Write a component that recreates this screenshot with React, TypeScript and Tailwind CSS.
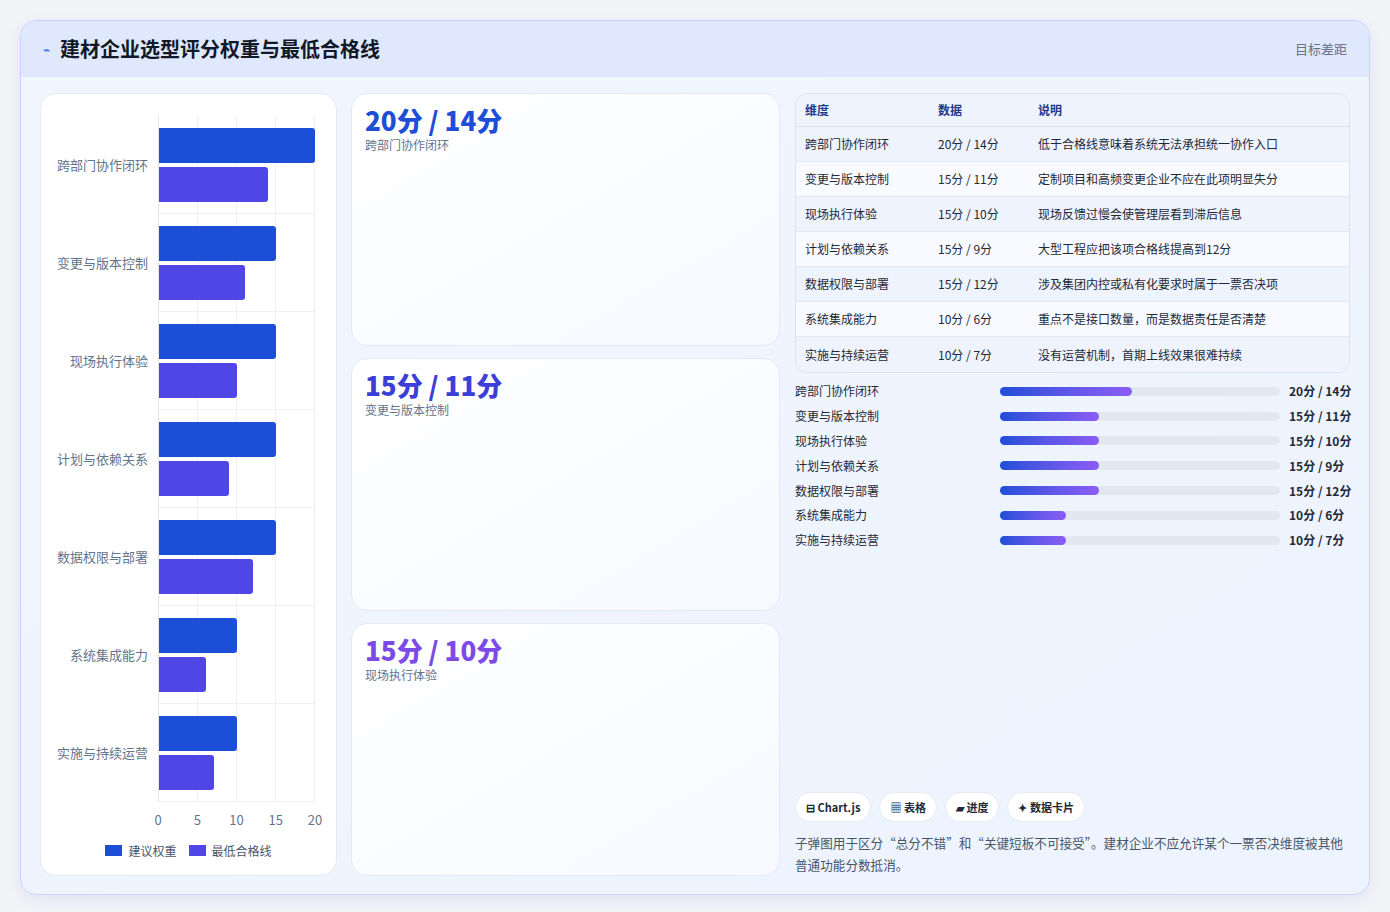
import React from "react";

const rows = [
  { name: "跨部门协作闭环", w: 20, m: 14, note: "低于合格线意味着系统无法承担统一协作入口" },
  { name: "变更与版本控制", w: 15, m: 11, note: "定制项目和高频变更企业不应在此项明显失分" },
  { name: "现场执行体验", w: 15, m: 10, note: "现场反馈过慢会使管理层看到滞后信息" },
  { name: "计划与依赖关系", w: 15, m: 9, note: "大型工程应把该项合格线提高到12分" },
  { name: "数据权限与部署", w: 15, m: 12, note: "涉及集团内控或私有化要求时属于一票否决项" },
  { name: "系统集成能力", w: 10, m: 6, note: "重点不是接口数量，而是数据责任是否清楚" },
  { name: "实施与持续运营", w: 10, m: 7, note: "没有运营机制，首期上线效果很难持续" },
];

const font = { fontFamily: '"Noto Sans CJK SC", "Noto Sans", sans-serif' };

const Chart = () => (
  <div className="flex h-full flex-col rounded-2xl border border-[#e3e9f5] bg-white px-3 pt-[22px] pb-3">
    <div className="flex">
      <div className="w-[105px] pr-[10px]">
        {rows.map((r) => (
          <div key={r.name} className="flex h-[98px] items-center justify-end text-[13px] text-[#64748b]">
            {r.name}
          </div>
        ))}
      </div>
      <div className="relative w-[157px] border-l border-[#e5e7eb]">
        <div className="absolute inset-0 grid grid-cols-4">
          {[0, 1, 2, 3].map((i) => (
            <div key={i} className="border-r border-[#eef0f4]" />
          ))}
        </div>
        {rows.map((r) => (
          <div key={r.name} className="relative flex h-[98px] flex-col justify-center gap-1 border-b border-[#eef0f4]">
            <div className="h-[35px] rounded-r-[3px] bg-[#1d4ed8]" style={{ width: `${(r.w / 20) * 156}px` }} />
            <div className="h-[35px] rounded-r-[3px] bg-[#4f46e5]" style={{ width: `${(r.m / 20) * 156}px` }} />
          </div>
        ))}
      </div>
    </div>
    <div className="ml-[105px] flex w-[157px] justify-between pt-2 text-[13px] text-[#64748b]">
      {["0", "5", "10", "15", "20"].map((t) => (
        <span key={t} className="flex w-0 justify-center whitespace-nowrap">{t}</span>
      ))}
    </div>
    <div className="mt-3 flex justify-center gap-3 text-[12px] text-[#475569]">
      <span className="flex items-center gap-[6px]"><span className="h-[11px] w-[17px] bg-[#1d4ed8]" />建议权重</span>
      <span className="flex items-center gap-[6px]"><span className="h-[11px] w-[17px] bg-[#4f46e5]" />最低合格线</span>
    </div>
  </div>
);

const cards = [
  { t: "20分 / 14分", s: "跨部门协作闭环", c: "text-[#1d4ed8]" },
  { t: "15分 / 11分", s: "变更与版本控制", c: "text-[#3b3fd8]" },
  { t: "15分 / 10分", s: "现场执行体验", c: "text-[#7c4ae6]" },
];

export default function App() {
  return (
    <div className="min-h-screen bg-[#f3f4f6] p-5" style={font}>
      <div className="overflow-hidden rounded-2xl border border-[#c7d2fe] bg-gradient-to-br from-[#f1f5fe] to-[#edf4ff] shadow-[0_4px_16px_rgba(99,102,241,0.12)]">
        <div className="flex h-[56px] items-center justify-between bg-[#dfe8fd] px-[22px]">
          <div className="flex items-center gap-[10px]">
            <span className="text-[12px] text-[#2563eb]">⌁</span>
            <h1 className="text-[20px] font-bold text-[#111827]">建材企业选型评分权重与最低合格线</h1>
          </div>
          <span className="text-[13px] text-[#64748b]">目标差距</span>
        </div>
        <div className="flex gap-[14px] px-[19px] pt-[16px] pb-[18px]">
          <div className="w-[297px] shrink-0">
            <Chart />
          </div>
          <div className="flex w-[429px] shrink-0 flex-col gap-3">
            {cards.map((c) => (
              <div key={c.s} className="h-[253px] rounded-2xl border border-[#e3e9f5] bg-gradient-to-br from-white to-[#f7f9ff] px-[13px] py-[10px]">
                <div className={`text-[26px] font-extrabold leading-[32px] ${c.c}`}>{c.t}</div>
                <div className="text-[12px] text-[#64748b]">{c.s}</div>
              </div>
            ))}
          </div>
          <div className="ml-[1px] flex min-w-0 flex-1 flex-col">
            <div className="overflow-hidden rounded-xl border border-[#dbe3f2] text-[12px]">
              <div className="grid h-[33px] grid-cols-[133px_100px_1fr] items-center border-b border-[#d8e0ee] bg-[#eef3fe] px-[9px] font-semibold text-[#1e3a8a]">
                <span>维度</span><span>数据</span><span>说明</span>
              </div>
              {rows.map((r, i) => (
                <div key={r.name} className={`grid h-[35px] grid-cols-[133px_100px_1fr] items-center px-[9px] text-[#1f2937] ${i < rows.length - 1 ? "border-b border-[#e2e8f0]" : ""} ${i % 2 === 0 ? "bg-[#eef3fd]" : "bg-[#f8faff]"}`}>
                  <span>{r.name}</span>
                  <span>{r.w}分 / {r.m}分</span>
                  <span>{r.note}</span>
                </div>
              ))}
            </div>
            <div className="mt-[6px] flex flex-col">
              {rows.map((r) => (
                <div key={r.name} className="flex h-[24.8px] items-center text-[12px] text-[#1f2937]">
                  <span className="w-[205px] shrink-0">{r.name}</span>
                  <div className="h-[9px] w-[280px] shrink-0 rounded-full bg-[#e2e8f0]">
                    <div className="h-full rounded-full bg-gradient-to-r from-[#1d4ed8] to-[#8b5cf6]" style={{ width: `${r.w * 2.35}%` }} />
                  </div>
                  <span className="ml-[9px] whitespace-nowrap font-semibold">{r.w}分 / {r.m}分</span>
                </div>
              ))}
            </div>
            <div className="flex-1" />
            <div className="flex gap-2 text-[11px] font-semibold text-[#1f2937]">
              {["⊟ Chart.js", "▦ 表格", "▰ 进度", "✦ 数据卡片"].map((p) => (
                <span key={p} className="rounded-full border border-[#e5eaf3] bg-white px-[10px] py-[6px]">{p}</span>
              ))}
            </div>
            <p className="mt-[10px] text-[12.6px] leading-[22px] text-[#475569]">
              子弹图用于区分“总分不错”和“关键短板不可接受”。建材企业不应允许某个一票否决维度被其他普通功能分数抵消。
            </p>
          </div>
        </div>
      </div>
    </div>
  );
}
